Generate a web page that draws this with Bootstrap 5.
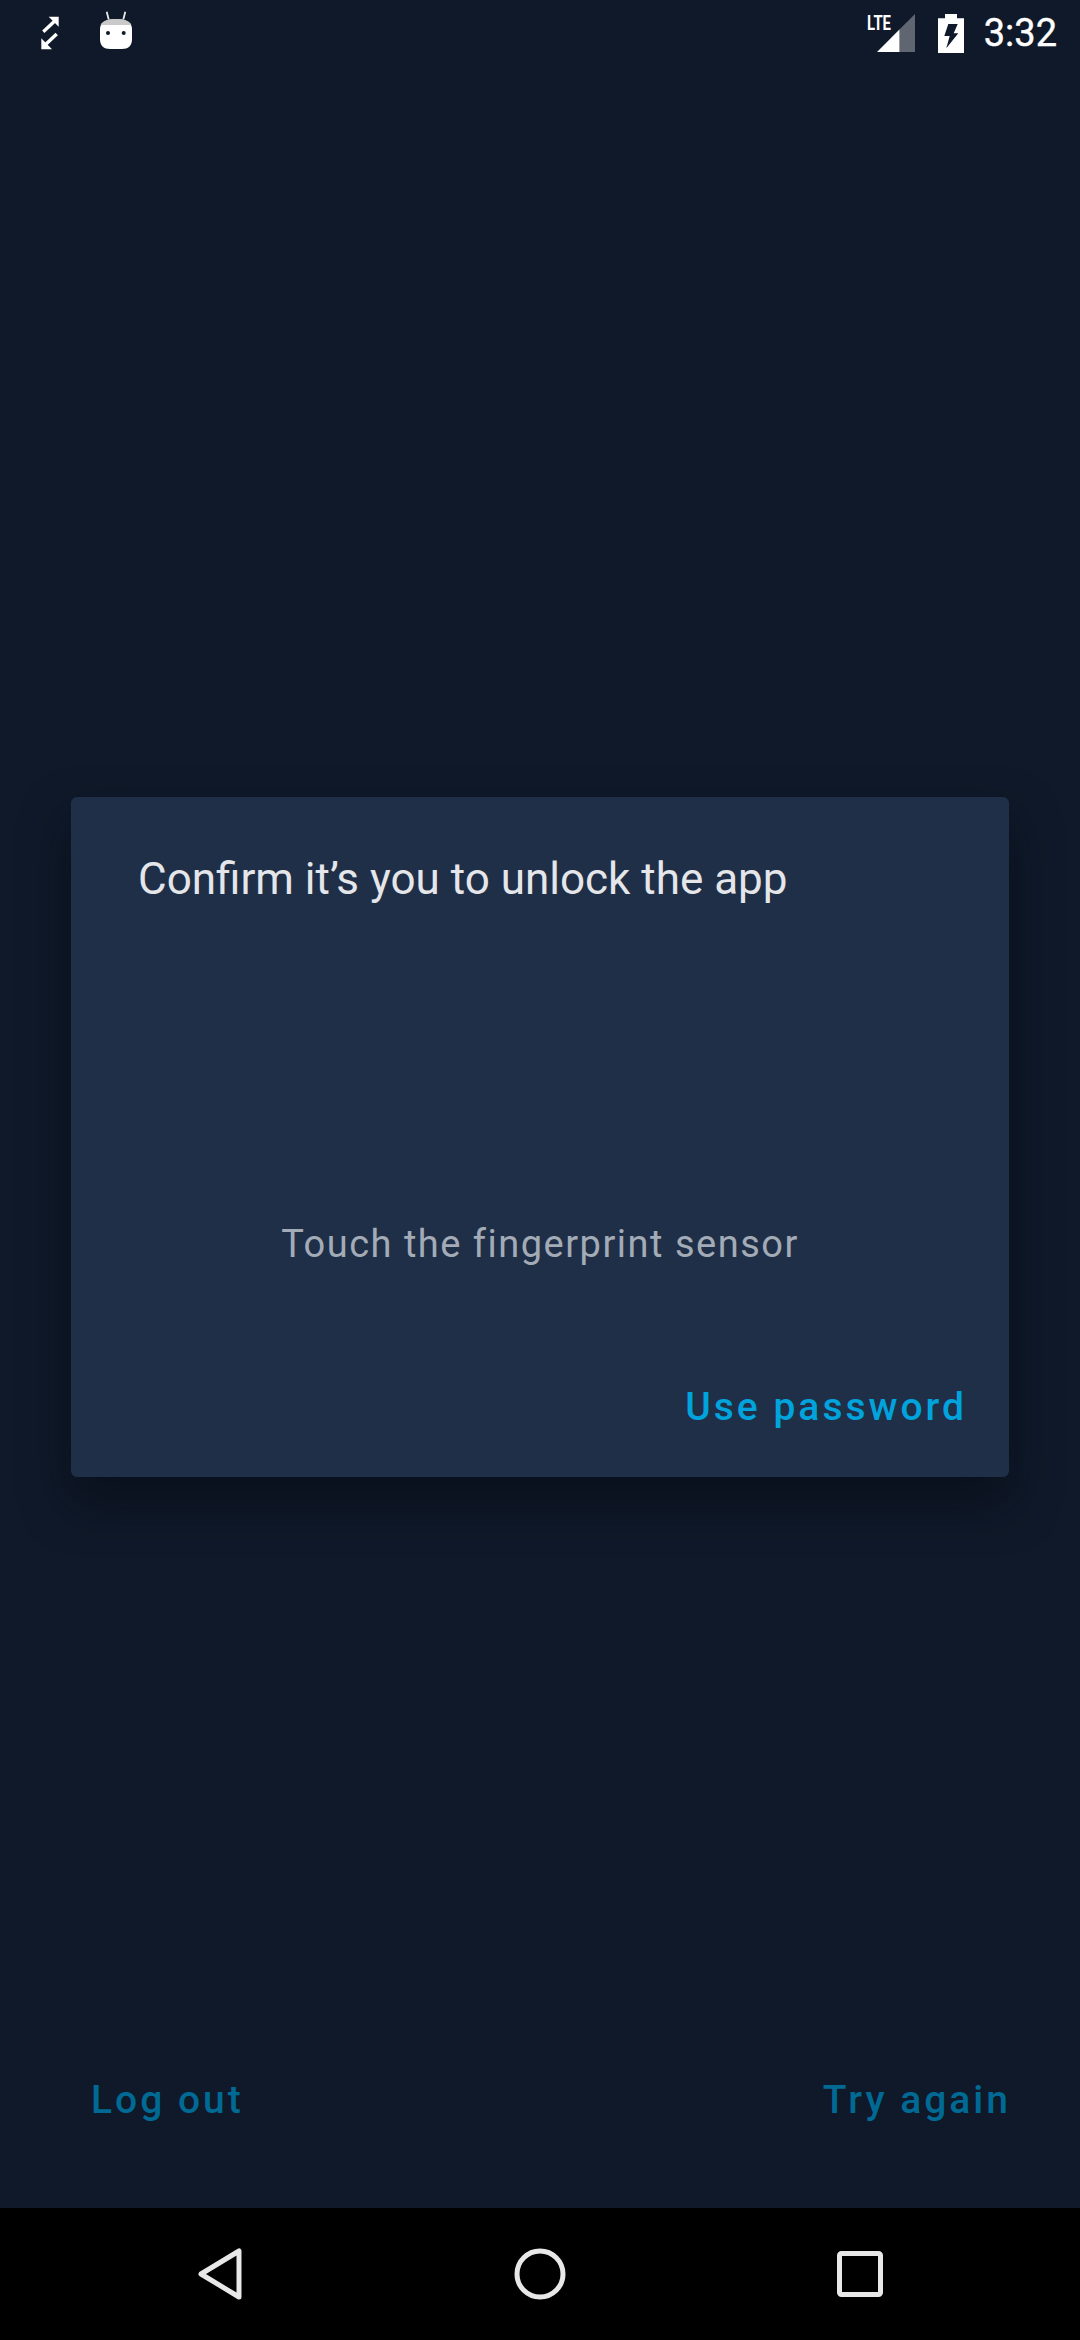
<!DOCTYPE html>
<html lang="en">
<head>
    <meta charset="UTF-8">
    <meta name="viewport" content="width=device-width, initial-scale=1.0">
    <title>Unlock</title>
    <link rel="stylesheet" href="https://cdn.jsdelivr.net/npm/bootstrap@5.3.0/dist/css/bootstrap.min.css">
    <style>
        body {
            background-color: #0f1929;
            font-family: Roboto, "Liberation Sans", sans-serif;
            height: 2340px;
            overflow: hidden;
        }

        .status-row {
            height: 66px;
            padding: 0 23px 0 40px;
        }

        .status-arrows {
            margin-right: 40px;
        }

        .status-android {
            margin-bottom: 6px;
        }

        .status-battery {
            margin-left: 21px;
        }

        .status-time {
            font-size: 38px;
            line-height: 1;
            color: #fff;
            margin-left: 20px;
            -webkit-text-stroke: 0.4px #fff;
        }

        .lock-area {
            padding: 731px 71px 0;
        }

        .lock-card {
            height: 680px;
            background-color: #202f48;
            border: 0;
            border-radius: 6px;
            box-shadow: 0 24px 48px rgba(6, 10, 18, 0.55);
        }

        .lock-title {
            font-size: 44px;
            font-weight: 400;
            line-height: 56px;
            color: #e4e6ea;
            margin: 54px 0 0 67px;
        }

        .lock-hint {
            font-size: 38px;
            line-height: 50px;
            letter-spacing: 1.5px;
            color: #a3abb7;
            margin-top: 312px;
        }

        .flat-btn {
            font-size: 39px;
            font-weight: 500;
            line-height: 50px;
            letter-spacing: 3px;
            padding: 0;
            border: 0;
            border-radius: 0;
        }

        .use-password {
            color: #00a3dc;
            margin: 0 42px 0 0;
        }

        .password-row {
            padding-bottom: 45px;
        }

        .bottom-actions {
            padding: 0 69px 0 91px;
            margin-top: auto;
            margin-bottom: 83px;
        }

        .dim-btn {
            color: #006a94;
        }

        .nav-strip {
            height: 132px;
            background-color: #000;
        }

        .nav-slot {
            width: 320px;
        }
    </style>
</head>
<body class="d-flex flex-column">

    <!-- Status bar -->
    <div class="status-row d-flex align-items-center flex-shrink-0">
        <svg class="status-arrows" width="20" height="36" viewBox="0 0 20 36">
            <path d="M8.7 1.7H18.7V11.7Z" fill="#fff"/>
            <path d="M15 5.7L3.3 16.7" stroke="#fff" stroke-width="3.4"/>
            <path d="M1.3 34.3V23.3L12 34.3Z" fill="#fff"/>
            <path d="M5 30L16.7 19" stroke="#fff" stroke-width="3.4"/>
        </svg>
        <svg class="status-android" width="32" height="40" viewBox="0 0 32 40">
            <path d="M6.7 1.7L8.7 9.5M25.3 1.7L23.3 9.5" stroke="#e8e8e8" stroke-width="1.8"/>
            <path d="M0 19C0 12 7 9 16 9S32 12 32 19V29C32 36 28 39 22 39H10C4 39 0 36 0 29Z" fill="#fff"/>
            <path d="M0.6 15C2 11 8 9 16 9S30 11 31.4 15Z" fill="#c9c9c9"/>
            <circle cx="8" cy="23" r="2" fill="#0f1929"/>
            <circle cx="23.7" cy="23" r="2" fill="#0f1929"/>
        </svg>
        <svg class="ms-auto" width="52" height="42" viewBox="0 0 52 42">
            <text x="2" y="18" font-family="Roboto, sans-serif" font-size="20" font-weight="700" fill="#fff" textLength="24" lengthAdjust="spacingAndGlyphs">LTE</text>
            <path d="M12 40L34.7 17.3V40Z" fill="#fff"/>
            <path d="M34.7 17.3L50 2V40H34.7Z" fill="#5f6672"/>
        </svg>
        <svg class="status-battery" width="26" height="39" viewBox="0 0 26 39">
            <path d="M7 0H19V4.3H26V39H0V4.3H7Z" fill="#fff"/>
            <path d="M10.3 10H19.7L15.7 19.3H20.3L8.3 34.3L11.7 22H6.3Z" fill="#0f1929"/>
        </svg>
        <span class="status-time">3:32</span>
    </div>

    <!-- Dialog -->
    <main class="lock-area flex-shrink-0">
        <div class="card lock-card">
            <h1 class="lock-title">Confirm it’s you to unlock the app</h1>
            <p class="lock-hint text-center mb-0">Touch the fingerprint sensor</p>
            <div class="password-row d-flex justify-content-end mt-auto">
                <button type="button" class="btn flat-btn use-password">Use password</button>
            </div>
        </div>
    </main>

    <!-- Bottom buttons -->
    <div class="bottom-actions d-flex justify-content-between">
        <button type="button" class="btn flat-btn dim-btn">Log out</button>
        <button type="button" class="btn flat-btn dim-btn">Try again</button>
    </div>

    <!-- Navigation bar -->
    <div class="nav-strip d-flex justify-content-center align-items-center flex-shrink-0">
        <div class="nav-slot d-flex justify-content-center">
            <svg width="44" height="52" viewBox="0 0 44 52">
                <path d="M41 3V49L3 26Z" fill="none" stroke="#e8e8e8" stroke-width="5" stroke-linejoin="round"/>
            </svg>
        </div>
        <div class="nav-slot d-flex justify-content-center">
            <svg width="52" height="52" viewBox="0 0 52 52">
                <circle cx="26" cy="26" r="23" fill="none" stroke="#e8e8e8" stroke-width="5"/>
            </svg>
        </div>
        <div class="nav-slot d-flex justify-content-center">
            <svg width="46" height="46" viewBox="0 0 46 46">
                <rect x="2.5" y="2.5" width="41" height="41" rx="2" fill="none" stroke="#e8e8e8" stroke-width="5"/>
            </svg>
        </div>
    </div>

</body>
</html>
